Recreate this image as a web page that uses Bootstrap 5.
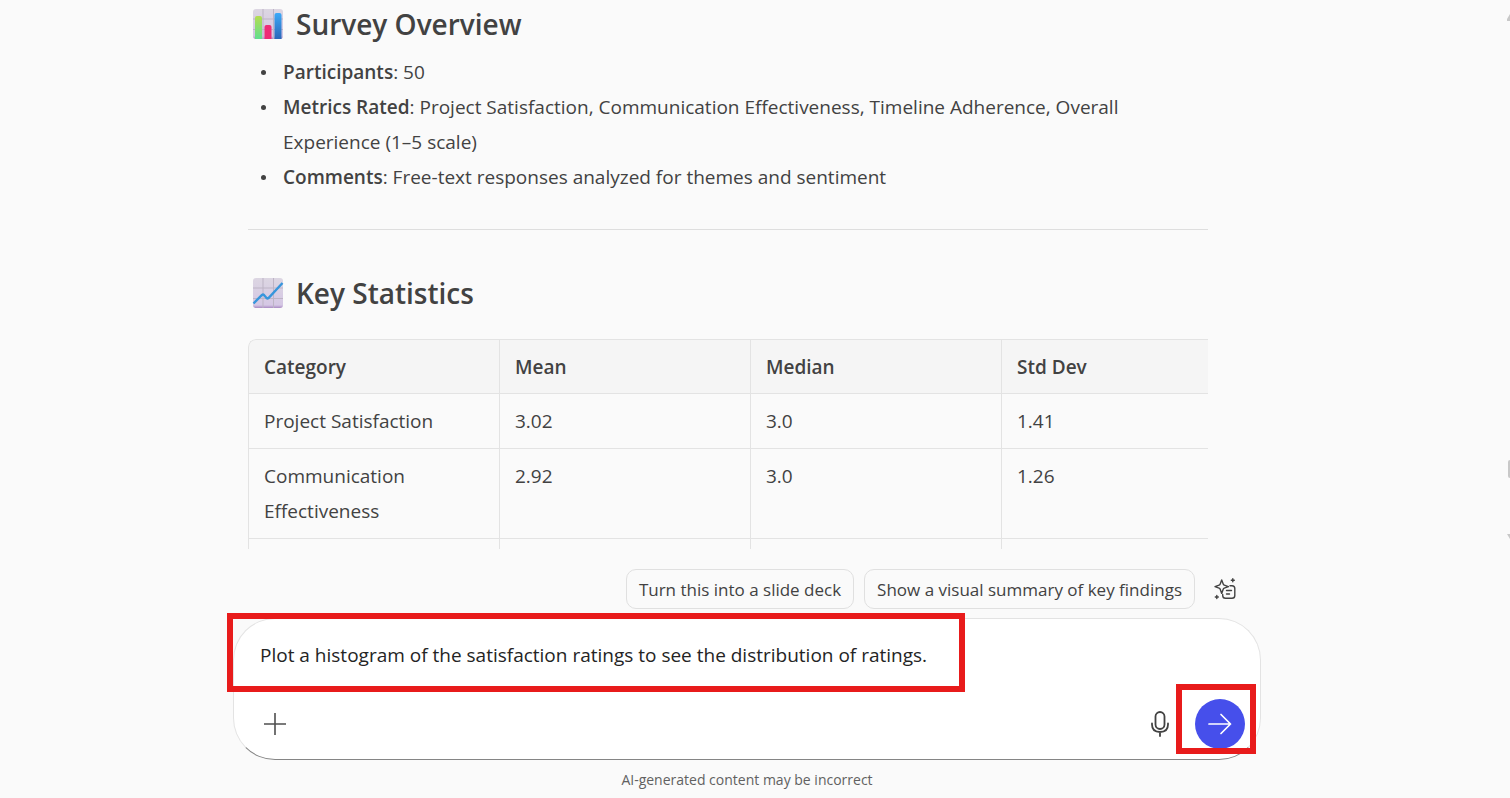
<!DOCTYPE html>
<html lang="en">
<head>
<meta charset="utf-8">
<meta name="viewport" content="width=device-width, initial-scale=1">
<title>Survey analysis chat</title>
<link href="https://cdn.jsdelivr.net/npm/bootstrap@5.3.0/dist/css/bootstrap.min.css" rel="stylesheet">
<style>
  body { font-family: "Open Sans", "Noto Sans", sans-serif; font-size: 19px; line-height: 35px; color: #424242; background: #fafafa; }
  .chat-page { padding-right: 16px; }
  .chat-scroll { min-height: 0; }
  .chat-width { width: 100%; max-width: 1028px; }
  .answer { padding: 0 53px 0 15px; }
  .answer h2 { font-size: 28px; font-weight: 600; line-height: 48px; gap: 12px; padding-left: 4px; }
  .answer strong, .stats th { font-weight: 600; }
  .answer ul { list-style: none; padding-left: 35px; margin: 7px 0 34px; }
  .answer li::before { content: ""; float: left; width: 5px; height: 5px; border-radius: 50%; background: #424242; margin: 15px 0 0 -22px; }
  .answer hr { margin: 0 0 39px; border-color: #dedede; opacity: 1; }
  .stats-wrap { margin-top: 22px; border-top-left-radius: 8px; }
  .stats { width: 1004px; table-layout: fixed; border-collapse: separate; border-spacing: 0; }
  .stats th, .stats td { padding: 10px 15px 9px; vertical-align: top; border-bottom: 1px solid #e3e3e3; border-left: 1px solid #e3e3e3; }
  .stats th { background: #f5f5f5; padding-bottom: 8px; border-top: 1px solid #e3e3e3; }
  .stats th:first-child { border-top-left-radius: 8px; }
  .suggest { padding: 20px 24px 9px 0; gap: 10px; }
  .suggest-btn { height: 40px; padding: 2px 12px 0; font-size: 17px; line-height: 36px; color: #424242; background: #fafafa; border: 1px solid #e0e0e0; border-radius: 10px; }
  .bare-btn { padding: 0; border: 0; background: none; color: #424242; line-height: 0; }
  .composer { background: #fff; border: 1px solid #e3e3e3; border-bottom-color: #858585; border-radius: 42px; padding: 19px 15px 10px 26px; }
  .prompt-box { display: block; width: 100%; height: 35px; padding: 0; border: 0; outline: 0; resize: none; overflow: hidden; background: none; color: #242424; }
  .tools { margin-top: 26px; }
  .send-btn { width: 50px; height: 50px; background: #464feb; color: #fff; }
  .callout { position: absolute; border: 6px solid #e81b1b; pointer-events: none; }
  .callout-prompt { left: -7px; top: -6px; width: 738px; height: 79px; }
  .callout-send { right: 4px; bottom: 5px; width: 80px; height: 70px; }
  .disclaimer { font-size: 14px; line-height: 36px; padding-top: 2px; color: #616161; }
  .rail { position: absolute; right: 0; top: 0; bottom: 0; width: 3px; color: #c8c8c8; }
  .rail svg { display: block; }
  .rail-thumb { width: 2px; height: 18px; background: #c8c8c8; border-radius: 2px 0 0 2px; margin: 439px 0 55px 1px; }
</style>
<script src="https://cdn.jsdelivr.net/npm/bootstrap@5.3.0/dist/js/bootstrap.bundle.min.js"></script>
</head>
<body>
<div class="chat-page vh-100 d-flex flex-column overflow-hidden position-relative">
  <main class="chat-scroll flex-grow-1 overflow-hidden">
    <article class="chat-width answer mx-auto">
      <h2 class="d-flex align-items-center mb-0">
        <svg width="32" height="32" viewBox="0 0 32 32" aria-hidden="true">
          <defs>
            <linearGradient id="paper" x1="0" y1="0" x2="0" y2="1"><stop offset="0" stop-color="#dcd6e2"/><stop offset=".9" stop-color="#d5c7e4"/><stop offset="1" stop-color="#aa8bc4"/></linearGradient>
            <linearGradient id="green" x1="0" y1="0" x2="0" y2="1"><stop offset="0" stop-color="#b4dc50"/><stop offset="1" stop-color="#62df91"/></linearGradient>
            <linearGradient id="blue" x1="0" y1="0" x2="0" y2="1"><stop offset="0" stop-color="#3ca9f8"/><stop offset="1" stop-color="#2b67b9"/></linearGradient>
          </defs>
          <rect x="1" y="1" width="30" height="30" rx="3" fill="url(#paper)"/>
          <path d="M11 1v30M21.500 1v30M1 11h30M1 21.500h30" stroke="#bdb4c5"/>
          <path d="M3 10q0-2 2-2h3q2 0 2 2v21H3z" fill="url(#green)"/>
          <path d="M12.500 19q0-2 2-2h3q2 0 2 2v12h-7z" fill="#ee2c76"/>
          <path d="M22.500 7q0-2 2-2h3q2 0 2 2v24h-7z" fill="url(#blue)"/>
        </svg>
        <span>Survey Overview</span>
      </h2>
      <ul>
        <li><strong>Participants</strong>: 50</li>
        <li><strong>Metrics Rated</strong>: Project Satisfaction, Communication Effectiveness, Timeline Adherence, Overall Experience (1–5 scale)</li>
        <li><strong>Comments</strong>: Free-text responses analyzed for themes and sentiment</li>
      </ul>
      <hr>
      <h2 class="d-flex align-items-center mb-0">
        <svg width="32" height="32" viewBox="0 0 32 32" aria-hidden="true">
          <rect x="1" y="1" width="30" height="30" rx="3" fill="url(#paper)"/>
          <path d="M11 1v30M21.500 1v30M1 11h30M1 21.500h30" stroke="#bdb4c5"/>
          <path d="M1.500 26.500l8.500-8.500q1-.8 2 0l2.500 3q1 .8 2 0L30.500 6" fill="none" stroke="#3796dc" stroke-width="2.400"/>
        </svg>
        <span>Key Statistics</span>
      </h2>
      <div class="stats-wrap overflow-hidden">
        <table class="stats">
          <thead><tr><th>Category</th><th>Mean</th><th>Median</th><th>Std Dev</th></tr></thead>
          <tbody>
            <tr><td>Project Satisfaction</td><td>3.02</td><td>3.0</td><td>1.41</td></tr>
            <tr><td>Communication Effectiveness</td><td>2.92</td><td>3.0</td><td>1.26</td></tr>
            <tr><td>&nbsp;</td><td></td><td></td><td></td></tr>
          </tbody>
        </table>
      </div>
    </article>
  </main>

  <footer class="chat-width mx-auto">
    <div class="suggest d-flex justify-content-end align-items-center">
      <button type="button" class="suggest-btn">Turn this into a slide deck</button>
      <button type="button" class="suggest-btn">Show a visual summary of key findings</button>
      <button type="button" class="bare-btn ms-2" aria-label="Prompt gallery">
        <svg width="24" height="24" viewBox="0 0 24 24" fill="none" stroke="currentColor" stroke-width="1.400" stroke-linejoin="round" stroke-linecap="round">
          <path d="M8.700 3l1.500 4.100q.3.800 1.100 1.100l4.100 1.500-4.100 1.500q-.8.300-1.100 1.100l-1.500 4.100-1.500-4.100q-.3-.8-1.100-1.100L2 9.700l4.100-1.500q.8-.3 1.100-1.100z"/>
          <path d="M17 8.700h2q2.800 0 2.800 2.800v7q0 2.800-2.800 2.800h-6.500q-2.800 0-2.800-2.800v-1M13.500 13.500h5M13.500 17h3"/>
          <path d="M19.800 1.800v3M18.300 3.300h3M3.800 18.500v3M2.300 20h3"/>
        </svg>
      </button>
    </div>
    <form class="composer position-relative" onsubmit="return false">
      <textarea class="prompt-box" rows="1" aria-label="Message" spellcheck="false">Plot a histogram of the satisfaction ratings to see the distribution of ratings.</textarea>
      <div class="tools d-flex align-items-center">
        <button type="button" class="bare-btn" aria-label="Add content">
          <svg width="30" height="30" viewBox="0 0 30 30" fill="none" stroke="#4f4f4f" stroke-width="1.600"><path d="M15 4v22M4 15h22"/></svg>
        </button>
        <button type="button" class="bare-btn ms-auto me-4" aria-label="Dictate">
          <svg width="22" height="28" viewBox="1 0 22 28" fill="none" stroke="currentColor" stroke-width="1.800" stroke-linecap="round"><rect x="7.500" y="2" width="9" height="17" rx="4.500"/><path d="M4 13.500v1q0 7.500 8 7.500t8-7.500v-1M12 22v4"/></svg>
        </button>
        <button type="submit" class="bare-btn send-btn rounded-circle" aria-label="Send">
          <svg width="26" height="26" viewBox="0 0 26 26" fill="none" stroke="currentColor" stroke-width="1.700" stroke-linecap="round" stroke-linejoin="round"><path d="M2 13h21.500M14 3.500l9.500 9.500-9.500 9.500"/></svg>
        </button>
      </div>
      <div class="callout callout-prompt"></div>
      <div class="callout callout-send"></div>
    </form>
    <div class="disclaimer text-center">AI-generated content may be incorrect</div>
  </footer>

  <div class="rail" aria-hidden="true">
    <svg width="3" height="21" viewBox="0 0 3 21"><path d="M3 14v7H0v-2z" fill="currentColor"/></svg>
    <div class="rail-thumb"></div>
    <svg width="3" height="7" viewBox="0 0 3 7"><path d="M0 1h3v5z" fill="currentColor"/></svg>
  </div>
</div>
</body>
</html>
